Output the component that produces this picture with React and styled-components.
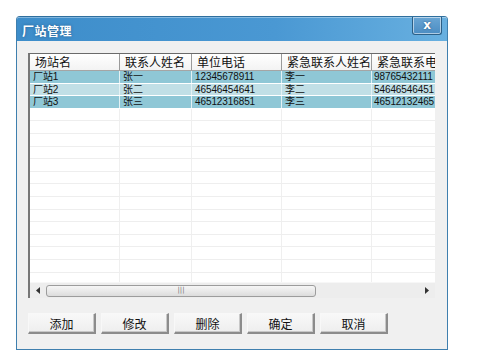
import React from "react";
import styled, { createGlobalStyle } from "styled-components";

const Global = createGlobalStyle`
  html, body {
    margin: 0;
    padding: 0;
    background: #ffffff;
  }
  body {
    font-family: "Noto Sans CJK SC", "Liberation Sans", sans-serif;
  }
`;

const Page = styled.div`
  width: 477px;
  height: 361px;
  padding: 16px 0 0 16px;
  box-sizing: border-box;
`;

const Window = styled.div`
  width: 432px;
  height: 334px;
  border: 1px solid #3f7fae;
  border-top-color: #2f6f9e;
  border-radius: 4px 4px 0 0;
  box-sizing: border-box;
  display: flex;
  flex-direction: column;
  background: #f0f0f0;
  overflow: hidden;
`;

const TitleBar = styled.div`
  height: 24px;
  flex: none;
  display: flex;
  align-items: center;
  justify-content: space-between;
  padding: 0 5px 0 5px;
  background: linear-gradient(to right, #3d8dca 0%, #4a98d3 60%, #68b0e0 100%);
  box-shadow: inset 0 1px 0 rgba(255, 255, 255, 0.35);
`;

const Title = styled.span`
  color: #ffffff;
  font-size: 12px;
  font-weight: bold;
  letter-spacing: 0.5px;
  margin-top: 2px;
  text-shadow: 0 0 3px rgba(20, 60, 100, 0.6);
`;

const CloseButton = styled.div`
  width: 28px;
  height: 17px;
  margin-top: -7px;
  border: 1px solid #2c5f86;
  border-top: none;
  border-radius: 0 0 3px 3px;
  box-shadow: inset 0 0 0 1px rgba(255, 255, 255, 0.55);
  background: linear-gradient(to bottom, #6aa6d4, #4b8cc2);
  color: #ffffff;
  font-family: "DejaVu Sans", sans-serif;
  font-size: 12px;
  font-weight: bold;
  display: flex;
  align-items: center;
  justify-content: center;
  text-shadow: 0 0 2px #1d4d74;
`;

const Body = styled.div`
  flex: 1;
  display: flex;
  flex-direction: column;
  padding: 12px 12px 0 11px;
`;

const ListView = styled.div`
  width: 407px;
  height: 245px;
  flex: none;
  display: flex;
  flex-direction: column;
  border-left: 2px solid #777777;
  border-top: 1px solid #6a6a6a;
  background: #ffffff;
  box-sizing: border-box;
  overflow: hidden;
`;

const cols = "90px 72px 90px 90px 63px";

const HeaderRow = styled.div`
  display: grid;
  grid-template-columns: ${cols};
  height: 16px;
  flex: none;
  background: linear-gradient(to bottom, #ffffff, #f3f3f3);
  border-bottom: 1px solid #a5a5a5;
`;

const HeaderCell = styled.div`
  font-size: 12px;
  line-height: 16px;
  color: #111111;
  padding-left: 5px;
  border-right: 1px solid #9a9a9a;
  white-space: nowrap;
  overflow: hidden;
  &:last-child {
    border-right: none;
  }
`;

const Rows = styled.div`
  flex: 1;
  overflow: hidden;
`;

const Row = styled.div`
  display: grid;
  grid-template-columns: ${cols};
  height: 12.6px;
  background: ${(p) => p.$tone || "#ffffff"};
  border-bottom: 1px solid ${(p) => (p.$tone ? "#ffffff" : "#eeeeee")};
  box-sizing: border-box;
`;

const Cell = styled.div`
  font-size: 10px;
  line-height: 11px;
  letter-spacing: -0.1px;
  color: #111111;
  padding-left: 3px;
  border-right: 1px solid ${(p) => (p.$filled ? "#e4f1f4" : "#efefef")};
  white-space: nowrap;
  overflow: hidden;
  font-family: "Liberation Sans", "Noto Sans CJK SC", sans-serif;
  &:last-child {
    border-right: none;
    padding-left: 2px;
  }
`;

const Scrollbar = styled.div`
  height: 15px;
  flex: none;
  display: flex;
  align-items: center;
  background: #ededed;
  border-top: 1px solid #f7f7f7;
`;

const Arrow = styled.div`
  width: 16px;
  display: flex;
  justify-content: center;
  align-items: center;
`;

const Track = styled.div`
  flex: 1;
  height: 14px;
  display: flex;
  align-items: center;
`;

const Thumb = styled.div`
  width: 270px;
  height: 12px;
  border: 1px solid #9c9c9c;
  border-radius: 3px;
  background: linear-gradient(to bottom, #f6f6f6, #dcdcdc);
  display: flex;
  align-items: center;
  justify-content: center;
  box-sizing: border-box;
`;

const Grip = styled.span`
  font-size: 7px;
  line-height: 7px;
  color: #777777;
  font-family: "DejaVu Sans", sans-serif;
`;

const ButtonRow = styled.div`
  display: flex;
  gap: 5px;
  margin-top: 15px;
`;

const Button = styled.button`
  width: 68px;
  height: 21px;
  padding: 0;
  margin: 0;
  font-family: "Noto Sans CJK SC", sans-serif;
  font-size: 12px;
  color: #111111;
  background: linear-gradient(to bottom, #f8f8f8, #eeeeee);
  border: 1px solid #f8f8f8;
  border-right: 2px solid #8c8c8c;
  border-bottom: 2px solid #8c8c8c;
  box-shadow: inset -1px -1px 0 #c8c8c8;
  display: flex;
  align-items: center;
  justify-content: center;
`;

const columns = ["场站名", "联系人姓名", "单位电话", "紧急联系人姓名", "紧急联系电话"];

const data = [
  ["厂站1", "张一", "12345678911", "李一", "98765432111"],
  ["厂站2", "张二", "46546454641", "李二", "54646546451"],
  ["厂站3", "张三", "46512316851", "李三", "46512132465"],
];

const tones = ["#8fc7d6", "#c1dfe6", "#8fc7d6"];

function ArrowIcon({ dir }) {
  return (
    <svg width="4" height="7" viewBox="0 0 4 7">
      {dir === "left" ? (
        <path d="M4 0 L0 3.5 L4 7 Z" fill="#333" />
      ) : (
        <path d="M0 0 L4 3.5 L0 7 Z" fill="#333" />
      )}
    </svg>
  );
}

export default function App() {
  const empty = Array.from({ length: 15 });
  return (
    <>
      <Global />
      <Page>
        <Window>
          <TitleBar>
            <Title>厂站管理</Title>
            <CloseButton>x</CloseButton>
          </TitleBar>
          <Body>
            <ListView>
              <HeaderRow>
                {columns.map((c) => (
                  <HeaderCell key={c}>{c}</HeaderCell>
                ))}
              </HeaderRow>
              <Rows>
                {data.map((r, i) => (
                  <Row key={i} $tone={tones[i]}>
                    {r.map((v, j) => (
                      <Cell key={j} $filled>
                        {v}
                      </Cell>
                    ))}
                  </Row>
                ))}
                {empty.map((_, i) => (
                  <Row key={"e" + i}>
                    {columns.map((c) => (
                      <Cell key={c} />
                    ))}
                  </Row>
                ))}
              </Rows>
              <Scrollbar>
                <Arrow>
                  <ArrowIcon dir="left" />
                </Arrow>
                <Track>
                  <Thumb>
                    <Grip>|||</Grip>
                  </Thumb>
                </Track>
                <Arrow>
                  <ArrowIcon dir="right" />
                </Arrow>
              </Scrollbar>
            </ListView>
            <ButtonRow>
              {["添加", "修改", "删除", "确定", "取消"].map((b) => (
                <Button key={b}>{b}</Button>
              ))}
            </ButtonRow>
          </Body>
        </Window>
      </Page>
    </>
  );
}
